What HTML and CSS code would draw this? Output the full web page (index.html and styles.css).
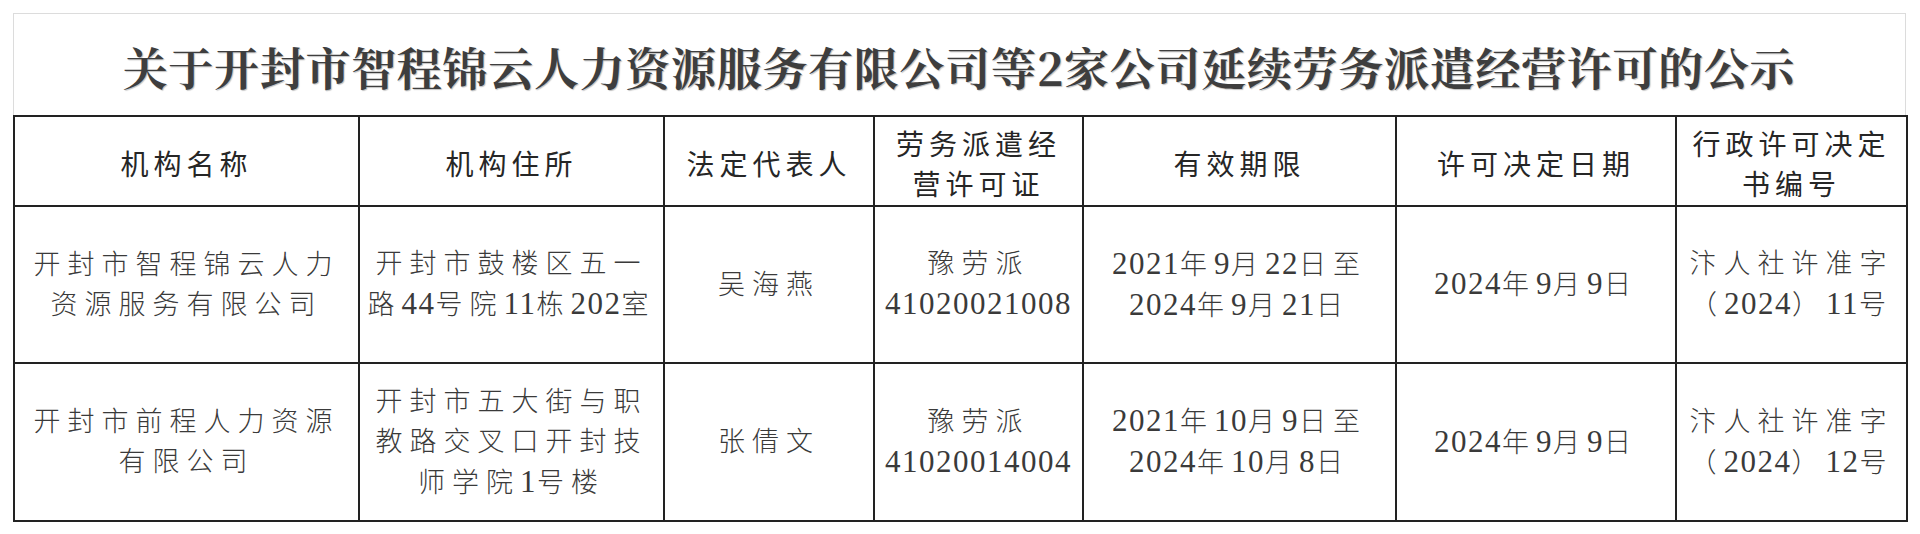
FILE: index.html
```html
<!DOCTYPE html>
<html lang="zh-CN">
<head>
<meta charset="utf-8">
<title>关于开封市智程锦云人力资源服务有限公司等2家公司延续劳务派遣经营许可的公示</title>
<link rel="stylesheet" href="styles.css">
</head>
<body>
<div class="doc">
  <div class="title">关于开封市智程锦云人力资源服务有限公司等2家公司延续劳务派遣经营许可的公示</div>
  <table class="grid">
    <colgroup>
      <col class="c1"><col class="c2"><col class="c3"><col class="c4"><col class="c5"><col class="c6"><col class="c7">
    </colgroup>
    <thead>
      <tr class="head">
        <th>机构名称</th>
        <th>机构住所</th>
        <th>法定代表人</th>
        <th>劳务派遣经<br>营许可证</th>
        <th>有效期限</th>
        <th>许可决定日期</th>
        <th>行政许可决定<br>书编号</th>
      </tr>
    </thead>
    <tbody>
      <tr class="row1">
        <td>开封市智程锦云人力<br>资源服务有限公司</td>
        <td>开封市鼓楼区五一<br>路<span class="n">44</span>号院<span class="n">11</span>栋<span class="n">202</span>室</td>
        <td>吴海燕</td>
        <td>豫劳派<br><span class="n">41020021008</span></td>
        <td><span class="n">2021</span>年<span class="n">9</span>月<span class="n">22</span>日至<br><span class="n">2024</span>年<span class="n">9</span>月<span class="n">21</span>日</td>
        <td><span class="n">2024</span>年<span class="n">9</span>月<span class="n">9</span>日</td>
        <td>汴人社许准字<br>（<span class="n">2024</span>）<span class="n">11</span>号</td>
      </tr>
      <tr class="row2">
        <td>开封市前程人力资源<br>有限公司</td>
        <td>开封市五大街与职<br>教路交叉口开封技<br>师学院<span class="n">1</span>号楼</td>
        <td>张倩文</td>
        <td>豫劳派<br><span class="n">41020014004</span></td>
        <td><span class="n">2021</span>年<span class="n">10</span>月<span class="n">9</span>日至<br><span class="n">2024</span>年<span class="n">10</span>月<span class="n">8</span>日</td>
        <td><span class="n">2024</span>年<span class="n">9</span>月<span class="n">9</span>日</td>
        <td>汴人社许准字<br>（<span class="n">2024</span>）<span class="n">12</span>号</td>
      </tr>
    </tbody>
  </table>
</div>
</body>
</html>
```

FILE: styles.css
```css
html, body {
  margin: 0;
  padding: 0;
  background: #ffffff;
}

.doc {
  width: 1893px;
  margin: 13px 0 0 13px;
}

.title {
  box-sizing: border-box;
  height: 102px;
  border: 1px solid #dcdcdc;
  border-bottom: none;
  display: flex;
  align-items: center;
  justify-content: center;
  padding: 4px 1px 0 0;
  font-family: "Noto Serif CJK SC", "Noto Sans CJK SC", serif;
  font-weight: 700;
  font-size: 45px;
  letter-spacing: 0.7px;
  color: #3e3e3e;
  text-shadow: 1px 1px 1px rgba(0, 0, 0, 0.25);
}

.grid {
  width: 1893px;
  border-collapse: collapse;
  table-layout: fixed;
  color: #333333;
}

.c1 { width: 345px; }
.c2 { width: 305px; }
.c3 { width: 210px; }
.c4 { width: 209px; }
.c5 { width: 313px; }
.c6 { width: 280px; }
.c7 { width: 231px; }

.grid th,
.grid td {
  border: 2px solid #222222;
  padding: 0 2px;
  text-align: center;
  vertical-align: middle;
  line-height: 40px;
  white-space: nowrap;
}

.grid th {
  font-family: "Noto Sans CJK SC", sans-serif;
  font-weight: 400;
  font-size: 28px;
  letter-spacing: 5px;
  color: #262626;
  padding-top: 4px;
}

.grid td {
  font-family: "Liberation Serif", "Noto Sans CJK SC", serif;
  font-weight: 300;
  font-size: 27px;
  letter-spacing: 7px;
  color: #3a3a3a;
}

.grid .n {
  font-family: "Liberation Serif", serif;
  font-size: 31px;
  letter-spacing: 1.5px;
  font-weight: 400;
}

.head { height: 90px; }
.row1 { height: 157px; }
.row2 { height: 158px; }
```
